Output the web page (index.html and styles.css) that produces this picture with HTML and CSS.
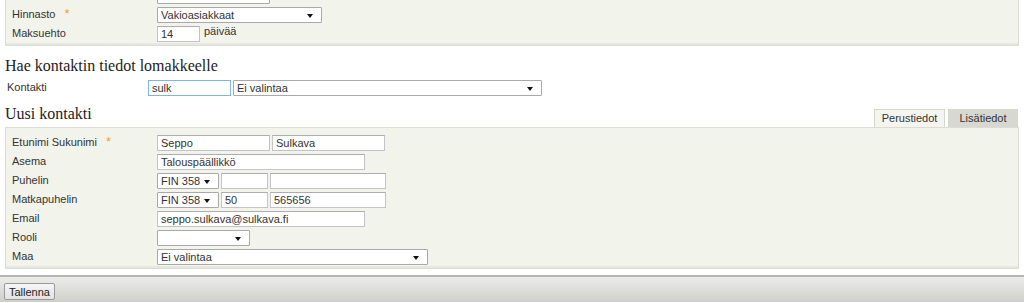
FILE: index.html
```html
<!DOCTYPE html>
<html lang="fi">
<head>
    <meta charset="UTF-8">
    <title>Uusi kontakti</title>
    <link rel="stylesheet" href="styles.css">
</head>
<body>
    <div class="panel top">
        <div class="row">
            <label></label>
            <div class="fields"><div class="sel w113"><span></span></div></div>
        </div>
        <div class="row">
            <label>Hinnasto <em>*</em></label>
            <div class="fields"><div class="sel w165"><span>Vakioasiakkaat</span></div></div>
        </div>
        <div class="row">
            <label>Maksuehto</label>
            <div class="fields"><input class="w43" value="14"><span class="unit">päivää</span></div>
        </div>
    </div>

    <h2 class="title">Hae kontaktin tiedot lomakkeelle</h2>
    <div class="row search">
        <label>Kontakti</label>
        <div class="fields">
            <input class="w83 focus" value="sulk">
            <div class="sel w309"><span>Ei valintaa</span></div>
        </div>
    </div>

    <div class="head">
        <h2 class="title">Uusi kontakti</h2>
        <ul class="tabs">
            <li class="on">Perustiedot</li>
            <li>Lisätiedot</li>
        </ul>
    </div>
    <div class="panel contact">
        <div class="row">
            <label>Etunimi Sukunimi <em>*</em></label>
            <div class="fields"><input class="w113" value="Seppo"><input class="w113" value="Sulkava"></div>
        </div>
        <div class="row">
            <label>Asema</label>
            <div class="fields"><input class="w208" value="Talouspäällikkö"></div>
        </div>
        <div class="row">
            <label>Puhelin</label>
            <div class="fields"><div class="sel w62"><span>FIN 358</span></div><input class="w47"><input class="w116"></div>
        </div>
        <div class="row">
            <label>Matkapuhelin</label>
            <div class="fields"><div class="sel w62"><span>FIN 358</span></div><input class="w47" value="50"><input class="w116" value="565656"></div>
        </div>
        <div class="row">
            <label>Email</label>
            <div class="fields"><input class="w208" value="seppo.sulkava@sulkava.fi"></div>
        </div>
        <div class="row">
            <label>Rooli</label>
            <div class="fields"><div class="sel w93"><span></span></div></div>
        </div>
        <div class="row">
            <label>Maa</label>
            <div class="fields"><div class="sel w271"><span>Ei valintaa</span></div></div>
        </div>
    </div>

    <div class="bar">
        <button>Tallenna</button>
    </div>
</body>
</html>
```

FILE: styles.css
```css
* {margin: 0; padding: 0; box-sizing: border-box;}
body {
    font-family: "Liberation Sans", Arial, sans-serif;
    font-size: 11px;
    color: #333;
    background: #fff;
    overflow: hidden;
}
.panel {
    margin: 0 5px;
    background: #f2f4eb;
    border: 1px solid #dcdcd3;
    box-shadow: inset 0 -2px 0 #e6e8df;
    display: flex;
    flex-direction: column;
    gap: 3px;
}
.panel.top {
    margin-top: -17px;
    padding: 4px 0 3px 6px;
}
.panel.contact {
    padding: 7px 0 3px 6px;
}
.row {
    display: grid;
    grid-template-columns: 145px 1fr;
    align-items: center;
    height: 16px;
}
.row label {
    line-height: 13px;
    margin-top: -2px;
}
.row label em {
    font-style: normal;
    color: #f0a040;
    font-size: 13px;
    line-height: 0;
    margin-left: 6px;
}
.fields {
    display: flex;
    gap: 2px;
    align-items: center;
    height: 16px;
}
input, .sel {
    height: 16px;
    border: 1px solid #c2c4c8;
    border-top-color: #abadb3;
    background: #fff;
    font-family: "Liberation Sans", Arial, sans-serif;
    font-size: 11px;
    color: #333;
    padding: 0 3px;
    outline: none;
}
.sel {
    position: relative;
    display: flex;
    align-items: center;
    border-color: #a9a9a9;
    border-radius: 1px;
}
.sel::after {
    content: "";
    position: absolute;
    right: 8px;
    top: 6px;
    border-left: 3px solid transparent;
    border-right: 3px solid transparent;
    border-top: 4px solid #111;
}
input.focus {
    border-color: #7eb4ea;
}
.unit {
    align-self: flex-start;
    margin-left: 2px;
    margin-top: -1px;
}
.w43 {width: 43px;}
.w47 {width: 47px;}
.w62 {width: 62px;}
.w83 {width: 83px;}
.w93 {width: 93px;}
.w113 {width: 113px;}
.w116 {width: 116px;}
.w165 {width: 165px;}
.w208 {width: 208px;}
.w271 {width: 271px;}
.w309 {width: 309px;}

.title {
    font-family: "Liberation Serif", Georgia, serif;
    font-weight: normal;
    font-size: 16px;
    line-height: 20px;
    color: #222;
    padding-left: 5px;
}
body > .title {
    margin: 10px 0 4px;
}
.search {
    grid-template-columns: 141px 1fr;
    padding-left: 7px;
}
.head {
    display: flex;
    justify-content: space-between;
    align-items: flex-end;
    margin-top: 8px;
    padding-right: 6px;
}
.head .title {
    margin-bottom: 3px;
}
.tabs {
    list-style: none;
    display: flex;
    gap: 3px;
}
.tabs li {
    width: 70px;
    height: 18px;
    line-height: 17px;
    text-align: center;
    border: 1px solid #d6d6ce;
    border-bottom: none;
    background: #d8d8d2;
    color: #333;
}
.tabs li.on {
    width: 71px;
    background: #f4f5ef;
}
.bar {
    margin-top: 6px;
    height: 27px;
    border-top: 2px solid #b4b4b2;
    background: linear-gradient(#ececea, #cfcfcb);
    padding: 6px 4px 0;
}
.bar button {
    width: 51px;
    height: 17px;
    font-family: "Liberation Sans", Arial, sans-serif;
    font-size: 11px;
    color: #222;
    background: linear-gradient(#f6f6f6, #e2e2e2);
    border: 1px solid #9a9a9a;
    border-radius: 2px;
}
```
